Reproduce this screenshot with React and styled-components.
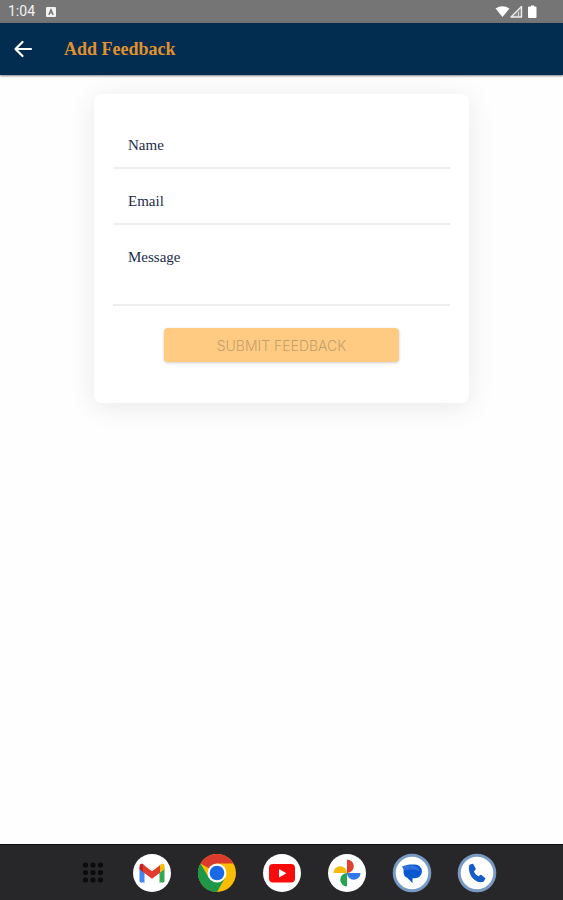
import React from "react";
import styled, { createGlobalStyle } from "styled-components";

const GlobalStyle = createGlobalStyle`
  *, *::before, *::after { box-sizing: border-box; }
  body { margin: 0; background: #fff; }
`;

const serif = `"Liberation Serif", "Times New Roman", serif`;

const Screen = styled.div`
  display: flex;
  flex-direction: column;
  min-height: 100vh;
  background: #fefefe;
`;

const StatusBar = styled.div`
  display: flex;
  align-items: center;
  justify-content: space-between;
  height: 23px;
  padding: 0 25px 0 8px;
  background: #757575;
  color: #f2f2f2;
  font: 400 14px/23px Roboto, sans-serif;
`;

const StatusGroup = styled.div`
  display: flex;
  align-items: center;
  gap: 11px;
`;

const AppBar = styled.header`
  display: flex;
  align-items: center;
  gap: 29px;
  height: 52px;
  padding: 0 12px;
  background: #022d50;
  box-shadow: 0 1px 2px rgba(0, 0, 0, 0.5);
`;

const BackButton = styled.button`
  display: flex;
  padding: 0;
  border: 0;
  background: none;
  cursor: pointer;
`;

const Title = styled.h1`
  margin: 0;
  color: #e0912f;
  font: 700 18px/24px ${serif};
`;

const Main = styled.main`
  flex: 1;
  padding: 19px 0;
`;

const Card = styled.form`
  display: flex;
  flex-direction: column;
  align-items: center;
  width: 66.6%;
  margin: 0 auto;
  padding: 19px 19px 41px;
  border-radius: 8px;
  background: #fff;
  box-shadow: 0 4px 28px rgba(0, 0, 0, 0.09);
`;

const Field = styled.label`
  display: grid;
  width: 100%;
  border-bottom: 2px solid #eeeeee;
  color: #1d2c4c;
  font: 400 15px/20px ${serif};
`;

const FieldLabel = styled.span`
  grid-area: 1 / 1;
  padding: 22px 15px 0;
  pointer-events: none;
`;

const TextInput = styled.input`
  grid-area: 1 / 1;
  width: 100%;
  height: ${(p) => p.$height}px;
  padding: 22px 15px 12px;
  border: 0;
  outline: 0;
  resize: none;
  background: transparent;
  color: inherit;
  font: inherit;

  &:not(:placeholder-shown) + ${FieldLabel},
  &:focus + ${FieldLabel} {
    padding-top: 4px;
    font-size: 12px;
  }
`;

const SubmitButton = styled.button`
  width: 70%;
  height: 34px;
  margin-top: 22px;
  border: 0;
  border-radius: 4px;
  background: #ffcb82;
  box-shadow: 0 1px 3px rgba(0, 0, 0, 0.2);
  color: #c49f6c;
  font: 300 14px/34px Inter, sans-serif;
  text-transform: uppercase;
`;

const Dock = styled.nav`
  display: flex;
  align-items: center;
  justify-content: center;
  gap: 25px;
  height: 56px;
  border-top: 1px solid #0c0c0e;
  background: #27272a;
`;

const DockButton = styled.button`
  display: flex;
  align-items: center;
  justify-content: center;
  width: 40px;
  height: 40px;
  padding: 0;
  border: 0;
  border-radius: 50%;
  background: none;
  cursor: pointer;
`;

function StatusIcons() {
  return (
    <svg width="43" height="14" viewBox="0 0 43 14" aria-hidden="true">
      <path d="M.5 3.500Q7.500-1 14.500 3.500L7.500 12Z" fill="#fff" />
      <path d="M26.500 1.500v10.500H16Z" fill="#8d8d8d" stroke="#eee" strokeWidth="1.400" strokeLinejoin="round" />
      <path d="M23.500 7v5" stroke="#d5d5d5" strokeWidth="1" />
      <path d="M34 1.500h2V.5h3v1h1.500q1 0 1 1V12q0 1-1 1h-6.500q-1 0-1-1V2.500q0-1 1-1Z" fill="#fff" />
    </svg>
  );
}

function KeyboardBadge() {
  return (
    <svg width="10" height="10" viewBox="0 0 10 10" aria-hidden="true">
      <rect width="10" height="10" rx="1" fill="#f2f2f2" />
      <path d="M2.800 8 5 2.500 7.200 8M3.600 6h2.800" fill="none" stroke="#6b6b6b" strokeWidth="1.200" />
    </svg>
  );
}

function BackArrow() {
  return (
    <svg width="23" height="24" viewBox="0 0 23 24" aria-hidden="true">
      <path d="M10.500 5 3.500 12l7 7M3.500 12h15.500" fill="none" stroke="#fff" strokeWidth="2.200" strokeLinecap="round" strokeLinejoin="round" />
    </svg>
  );
}

const dotColumns = [18.5, 26, 33.5];
const dotRows = [12, 19.5, 27];

const apps = [
  {
    name: "All apps",
    art: dotRows.map((y) =>
      dotColumns.map((x) => <circle key={`${x}-${y}`} cx={x} cy={y} r="2.600" fill="#0b0b0d" />)
    ),
  },
  {
    name: "Gmail",
    art: (
      <>
        <circle cx="20" cy="20" r="19" fill="#fff" />
        <path d="M7.500 14v14q0 1.500 1.500 1.500h3.500V17Z" fill="#4285f4" />
        <path d="M32.500 14v14q0 1.500-1.500 1.500h-3.500V17Z" fill="#34a853" />
        <path d="M27.500 12.500v7.500l5-3.700V14q0-3.700-3-3.200Z" fill="#fbbc04" />
        <path d="M12.500 12.500v7.500l-5-3.700V14q0-3.700 3-3.200Z" fill="#c5221f" />
        <path d="M11 11.500 20 18.300l8-6.100v7.500L20 25.800l-9-6.900Z" fill="#e13a2e" />
      </>
    ),
  },
  {
    name: "Chrome",
    art: (
      <>
        <circle cx="20" cy="20" r="19" fill="#fbbc04" />
        <path d="M20 20 3.500 10.500A19 19 0 0 1 36.500 10.500H20Z" fill="#db3b2d" />
        <path d="M3.500 10.500A19 19 0 0 0 20 39l8.200-14.300L20 20 11.800 24.700Z" fill="#1e9748" />
        <circle cx="20" cy="20" r="9.500" fill="#fff" />
        <circle cx="20" cy="20" r="7.300" fill="#1a69e5" />
      </>
    ),
  },
  {
    name: "YouTube",
    art: (
      <>
        <circle cx="20" cy="20" r="19" fill="#fff" />
        <rect x="7" y="11" width="26" height="18.500" rx="4" fill="#fa0b0b" />
        <path d="m17 16 7.500 4.200L17 24.500Z" fill="#fff" />
      </>
    ),
  },
  {
    name: "Photos",
    art: (
      <>
        <circle cx="20" cy="20" r="19" fill="#fff" />
        <path d="M20 20V6.500a6.750 6.750 0 0 1 0 13.500Z" fill="#e2402f" />
        <path d="M20 20H33.500a6.750 6.750 0 0 1-13.500 0Z" fill="#3377e8" />
        <path d="M20 20V33.500a6.750 6.750 0 0 1 0-13.500Z" fill="#25a34e" />
        <path d="M20 20H6.500a6.750 6.750 0 0 1 13.500 0Z" fill="#f6b90c" />
      </>
    ),
  },
  {
    name: "Messages",
    art: (
      <>
        <circle cx="20" cy="20" r="17.800" fill="#fff" stroke="#7899c3" strokeWidth="3" />
        <path d="M17.500 11.500h5.500a6.900 6.900 0 0 1 0 13.800H20.500V30L15.500 25Q11.500 23.500 11.500 18.500 11.500 11.500 17.500 11.500Z" fill="#0b57d0" />
        <path d="M10 13.500Q14 11.500 20 12.500q7 1 7.500 5.500Q20 15.500 12 17.500Z" fill="#2b70de" />
      </>
    ),
  },
  {
    name: "Phone",
    art: (
      <>
        <circle cx="20" cy="20" r="17.800" fill="#fff" stroke="#7899c3" strokeWidth="3" />
        <path d="M13 12.500 15.500 11.500 18 16 16 18.500Q17.500 22.500 21.300 24.300L24 22.500 27.500 25.500 26 28Q21 29.500 16.500 25 11.800 20 13 12.500Z" fill="#155bc9" stroke="#155bc9" strokeWidth="1.600" strokeLinejoin="round" />
      </>
    ),
  },
];

export default function App() {
  return (
    <Screen>
      <GlobalStyle />
      <StatusBar>
        <StatusGroup>
          <span>1:04</span>
          <KeyboardBadge />
        </StatusGroup>
        <StatusIcons />
      </StatusBar>
      <AppBar>
        <BackButton type="button" aria-label="Back">
          <BackArrow />
        </BackButton>
        <Title>Add Feedback</Title>
      </AppBar>
      <Main>
        <Card onSubmit={(e) => e.preventDefault()}>
          <Field>
            <TextInput type="text" name="name" placeholder=" " $height={54} />
            <FieldLabel>Name</FieldLabel>
          </Field>
          <Field>
            <TextInput type="email" name="email" placeholder=" " $height={54} />
            <FieldLabel>Email</FieldLabel>
          </Field>
          <Field>
            <TextInput as="textarea" name="message" placeholder=" " $height={79} />
            <FieldLabel>Message</FieldLabel>
          </Field>
          <SubmitButton type="submit" disabled>
            Submit Feedback
          </SubmitButton>
        </Card>
      </Main>
      <Dock aria-label="Apps">
        {apps.map((app) => (
          <DockButton key={app.name} type="button" aria-label={app.name}>
            <svg width="40" height="40" viewBox="0 0 40 40" aria-hidden="true">
              {app.art}
            </svg>
          </DockButton>
        ))}
      </Dock>
    </Screen>
  );
}
